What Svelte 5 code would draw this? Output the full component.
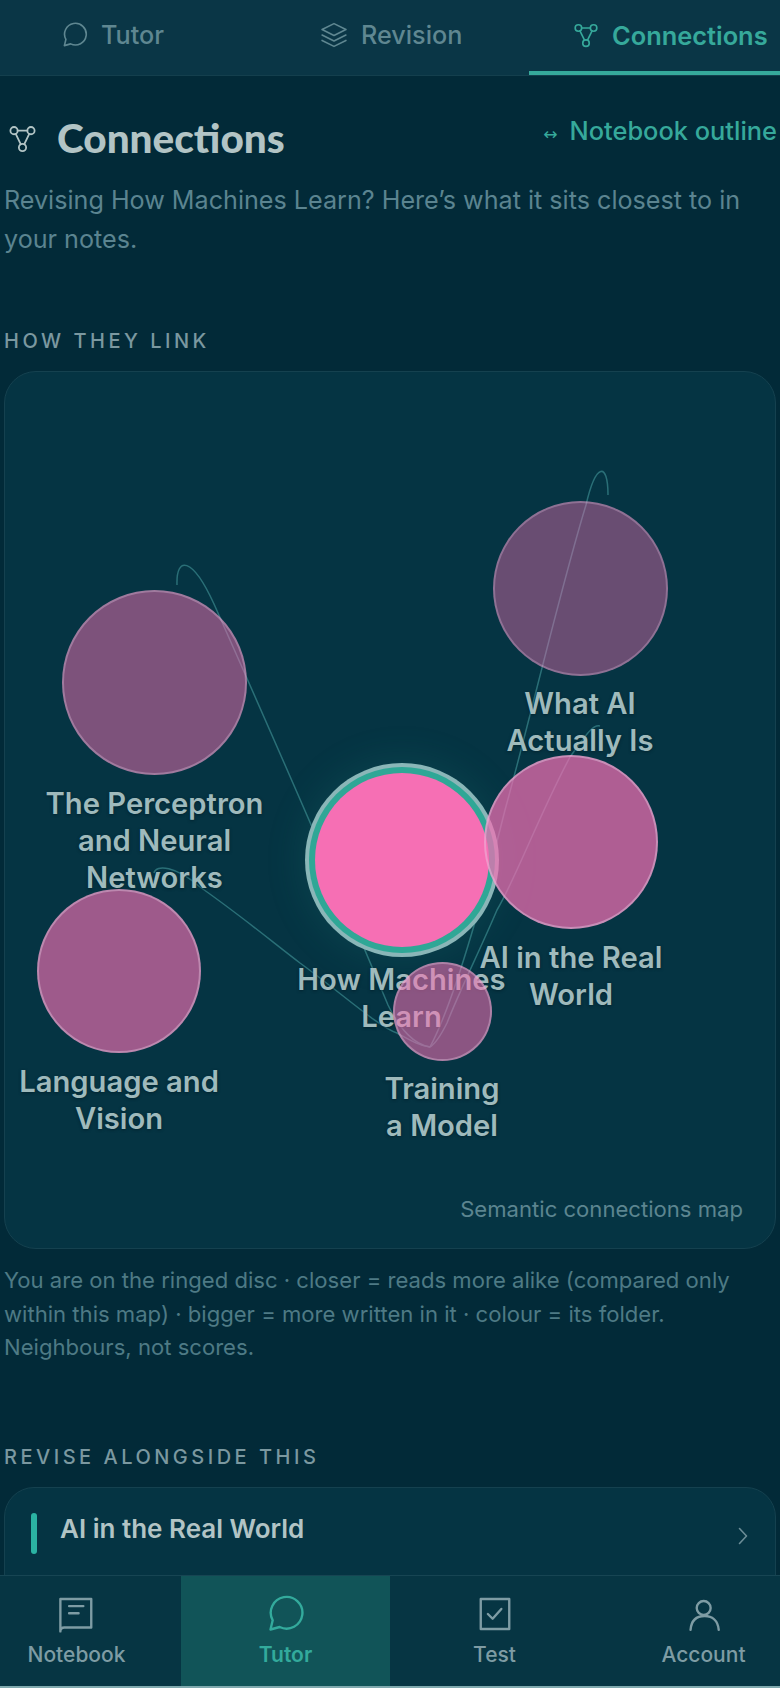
<script>
  const ox = 5, oy = 372;
  const nodes = [
    { cx: 401.5, cy: 860, r: 87, a: 1, cls: 'me', top: 961, lines: ['How Machines', 'Learn'] },
    { cx: 154.5, cy: 682.5, r: 92.5, a: 0.5, cls: '', top: 785, lines: ['The Perceptron', 'and Neural', 'Networks'] },
    { cx: 580, cy: 588.5, r: 87.5, a: 0.42, cls: '', top: 685, lines: ['What AI', 'Actually Is'] },
    { cx: 571, cy: 842, r: 87, a: 0.71, cls: '', top: 939, lines: ['AI in the Real', 'World'] },
    { cx: 119, cy: 971, r: 82, a: 0.64, cls: '', top: 1063, lines: ['Language and', 'Vision'] },
    { cx: 442, cy: 1011.5, r: 49.5, a: 0.56, cls: '', top: 1070, lines: ['Training', 'a Model'] }
  ];
  const edges = [
    'M177 585 C176 556 192 556 214 604 C250 685 340 890 388 1005 C400 1030 415 1045 430 1047',
    'M608 495 C608 462 596 462 586 505 C560 590 530 720 505 810 C485 890 455 1000 430 1047',
    'M600 726 C592 724 584 738 570 757 C540 813 515 880 497 910 C480 950 460 990 447 1023 C440 1037 435 1044 430 1047',
    'M154 873 C156 864 176 866 200 887 C240 915 270 940 300 963 C340 992 380 1028 397 1033 C410 1040 420 1046 430 1047'
  ];
  const tabs = [
    { label: 'Tutor', icon: 'chat', cls: 't1' },
    { label: 'Revision', icon: 'layers', cls: 't2' },
    { label: 'Connections', icon: 'graph', cls: 't3 active' }
  ];
  const navs = [
    { label: 'Notebook', icon: 'note' },
    { label: 'Tutor', icon: 'chat', active: true },
    { label: 'Test', icon: 'check' },
    { label: 'Account', icon: 'user' }
  ];
</script>

{#snippet icon(name, cls)}
  <svg class={cls} viewBox="0 0 24 24" fill="none" stroke="currentColor" stroke-width="1.5" stroke-linecap="round" stroke-linejoin="round">
    {#if name === 'chat'}
      <path d="M2.2 21.8 L3.6 16 A10 10 0 1 1 8 20.2 Z" />
    {:else if name === 'layers'}
      <path d="M12 1.5 L23 7 L12 12.5 L1 7 Z" />
      <path d="M1 12 L12 17.5 L23 12" />
      <path d="M1 17 L12 22.5 L23 17" />
    {:else if name === 'graph'}
      <circle cx="5" cy="5.5" r="3" />
      <circle cx="19" cy="5.5" r="3" />
      <circle cx="12" cy="19.5" r="3" />
      <path d="M8 5.5 H16 M6.4 8.2 L10.6 16.8 M17.6 8.2 L13.4 16.8" />
    {:else if name === 'note'}
      <path d="M1.5 23 V2.5 H21 V20.5 H4 Q1.5 20.5 1.5 23 Z" />
      <path d="M7 7 H16 M7 11.5 H13" />
    {:else if name === 'check'}
      <path d="M3 2.5 H21 V21.5 H3 Z" />
      <path d="M7.5 12 L10.5 15 L16 8.8" />
    {:else if name === 'user'}
      <circle cx="11.8" cy="8.2" r="4.4" />
      <path d="M3.5 22 C4 16 7.5 13.3 12.4 13.3 C17 13.3 20.8 16 21.3 22" />
    {/if}
  </svg>
{/snippet}

<div class="page">
  <div class="tabs">
    {#each tabs as t}
      <div class="tab {t.cls}">
        {@render icon(t.icon, 'tabicon')}
        <span>{t.label}</span>
      </div>
    {/each}
  </div>

  <main class="main">
    <div class="head">
      <h1 class="title">
        {@render icon('graph', 'titleicon')}
        <span>Connections</span>
      </h1>
      <div class="outline"><span class="arrow">↔</span><span>Notebook outline</span></div>
    </div>
    <p class="lede">Revising How Machines Learn? Here’s what it sits closest to in your notes.</p>

    <h2 class="section first">HOW THEY LINK</h2>
    <div class="map">
      <svg class="edges" viewBox="0 0 770 876">
        <g transform="translate({-ox} {-oy})">
          {#each edges as d}
            <path {d} />
          {/each}
        </g>
      </svg>
      {#each nodes as n}
        <div
          class="disc {n.cls}"
          style="left:{n.cx - n.r - ox}px;top:{n.cy - n.r - oy}px;width:{n.r * 2}px;height:{n.r * 2}px;--a:{n.a}"
        ></div>
        <div class="label" style="left:{n.cx - ox}px;top:{n.top - oy}px">
          {#each n.lines as l}<div>{l}</div>{/each}
        </div>
      {/each}
      <div class="mapnote">Semantic connections map</div>
    </div>
    <p class="caption">You are on the ringed disc · closer = reads more alike (compared only within this map) · bigger = more written in it · colour = its folder. Neighbours, not scores.</p>

    <h2 class="section second">REVISE ALONGSIDE THIS</h2>
    <div class="row">
      <span class="bar"></span>
      <span class="rowtitle">AI in the Real World</span>
      <svg class="chev" viewBox="0 0 12 20" fill="none" stroke="currentColor" stroke-width="1.6" stroke-linecap="round" stroke-linejoin="round"><path d="M2.5 2.5 L9.5 10 L2.5 17.5" /></svg>
    </div>
  </main>

  <nav class="nav">
    {#each navs as n}
      <div class="navitem" class:on={n.active}>
        {@render icon(n.icon, 'navicon')}
        <span>{n.label}</span>
      </div>
    {/each}
  </nav>
</div>

<style>
  :global(body) {
    margin: 0;
    background: #032a38;
  }
  .page {
    width: 780px;
    height: 1688px;
    display: flex;
    flex-direction: column;
    overflow: hidden;
    background: #022a38;
    font-family: Inter, "Liberation Sans", sans-serif;
  }
  .tabs {
    flex: none;
    height: 76px;
    box-sizing: border-box;
    display: grid;
    grid-template-columns: 251px 278px 251px;
    background: #0a3646;
    border-bottom: 1px solid #143f4d;
  }
  .tab {
    display: flex;
    align-items: center;
    gap: 14px;
    height: 75px;
    box-sizing: border-box;
    padding-bottom: 5px;
    font-size: 25.2px;
    font-weight: 500;
    color: #5f8791;
    white-space: nowrap;
  }
  .t1 { padding-left: 62px; gap: 13px; }
  .t2 { padding-left: 70px; }
  .t3 { padding-left: 44px; gap: 13px; }
  .active {
    color: #36a99b;
    font-size: 25.4px;
    font-weight: 600;
    border-bottom: 4px solid #36a99b;
    padding-bottom: 1px;
  }
  .tabicon {
    width: 26px;
    height: 26px;
    flex: none;
  }
  .main {
    flex: 1;
    min-height: 0;
    overflow: hidden;
    padding: 0 4px;
  }
  .head {
    display: flex;
    justify-content: space-between;
    align-items: flex-start;
    height: 92px;
    padding-top: 33px;
    box-sizing: border-box;
  }
  .title {
    margin: 0;
    display: flex;
    align-items: center;
    gap: 20px;
    padding-left: 4px;
    font-family: Lato, sans-serif;
    font-weight: 900;
    font-size: 40.5px;
    line-height: 58px;
    color: #b2c4c5;
  }
  .titleicon {
    width: 29px;
    height: 29px;
    flex: none;
    color: #b2c4c5;
  }
  .outline {
    display: flex;
    align-items: baseline;
    gap: 12px;
    margin-right: -1px;
    margin-top: 6px;
    font-size: 25.4px;
    line-height: 32px;
    font-weight: 500;
    color: #36a99b;
    white-space: nowrap;
  }
  .arrow {
    font-size: 17px;
    font-family: "DejaVu Sans", sans-serif;
  }
  .lede {
    margin: 13px 0 0;
    font-size: 25.15px;
    line-height: 39px;
    color: #5b8490;
  }
  .section {
    margin: 0;
    font-size: 20px;
    line-height: 24px;
    font-weight: 500;
    letter-spacing: 3.5px;
    color: #7b98a0;
  }
  .first { margin-top: 70px; }
  .second { margin-top: 80px; }
  .map {
    position: relative;
    margin-top: 18px;
    height: 878px;
    box-sizing: border-box;
    border: 1px solid #15414f;
    border-radius: 32px;
    background: #053443;
  }
  .edges {
    position: absolute;
    left: 0;
    top: 0;
    width: 770px;
    height: 876px;
    fill: none;
    stroke: #2a6f77;
    stroke-width: 1.5;
    pointer-events: none;
  }
  .disc {
    position: absolute;
    box-sizing: border-box;
    border-radius: 50%;
    background: rgba(245, 112, 180, var(--a));
    border: 2px solid rgba(235, 205, 230, calc(var(--a) * 0.5 + 0.08));
  }
  .me {
    background: #f66fb4;
    border: none;
    box-shadow: 0 0 0 6px #2fa796, 0 0 0 10px #8ab6b8, 0 0 40px 12px rgba(47, 167, 150, 0.14);
  }
  .label {
    position: absolute;
    transform: translateX(-50%);
    font-size: 29.2px;
    line-height: 37px;
    font-weight: 600;
    text-align: center;
    white-space: nowrap;
    color: #9fbabc;
    text-shadow: 0 1px 3px rgba(0, 30, 40, 0.75);
  }
  .mapnote {
    position: absolute;
    right: 32px;
    bottom: 25px;
    font-size: 22.1px;
    line-height: 28px;
    color: #5c8590;
  }
  .caption {
    margin: 15px 0 0;
    font-size: 22.1px;
    line-height: 33.5px;
    color: #4e7a85;
  }
  .row {
    margin-top: 18px;
    height: 130px;
    box-sizing: border-box;
    border: 1px solid #15414f;
    border-radius: 30px;
    background: #053443;
    display: flex;
    align-items: flex-start;
    padding: 25px 26px 0;
    gap: 23px;
  }
  .bar {
    flex: none;
    width: 6px;
    height: 41px;
    border-radius: 3px;
    background: #2bb3a3;
  }
  .rowtitle {
    flex: 1;
    font-size: 26px;
    line-height: 32px;
    font-weight: 600;
    color: #b2c4c5;
  }
  .chev {
    flex: none;
    width: 12px;
    height: 20px;
    margin-top: 13px;
    color: #6c8d97;
  }
  .nav {
    flex: none;
    height: 113px;
    box-sizing: border-box;
    margin-left: -28px;
    width: 836px;
    display: grid;
    grid-template-columns: repeat(4, 209px);
    background: #063543;
    border-top: 1px solid #174553;
    border-bottom: 2px solid #7fa9ae;
  }
  .navitem {
    display: flex;
    flex-direction: column;
    align-items: center;
    padding-top: 19px;
    gap: 8px;
    font-size: 21px;
    line-height: 28px;
    font-weight: 500;
    color: #7e9ca4;
  }
  .navicon {
    width: 38px;
    height: 38px;
    flex: none;
  }
  .on {
    background: #115458;
    color: #33aa9c;
    font-weight: 600;
  }
</style>
